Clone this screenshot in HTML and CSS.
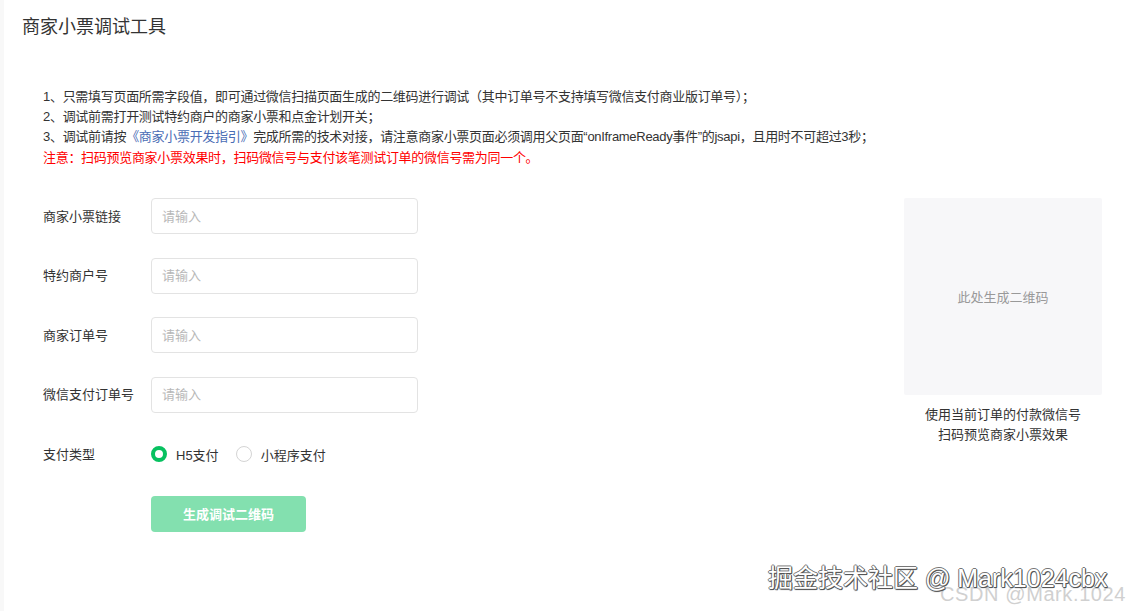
FILE: index.html
```html
<!DOCTYPE html>
<html lang="zh-CN">
<head>
<meta charset="utf-8">
<title>商家小票调试工具</title>
<link rel="stylesheet" href="styles.css">
</head>
<body>
<div class="page">
  <div class="header">商家小票调试工具</div>
  <div class="notes">
    <p>1、只需填写页面所需字段值，即可通过微信扫描页面生成的二维码进行调试（其中订单号不支持填写微信支付商业版订单号）；</p>
    <p>2、调试前需打开测试特约商户的商家小票和点金计划开关；</p>
    <p>3、调试前请按<a class="link" href="#">《商家小票开发指引》</a>完成所需的技术对接，请注意商家小票页面必须调用父页面“onIframeReady事件”的jsapi，且用时不可超过3秒；</p>
    <p class="warn">注意：扫码预览商家小票效果时，扫码微信号与支付该笔测试订单的微信号需为同一个。</p>
  </div>
  <div class="main">
    <div class="form">
      <div class="row">
        <label class="label">商家小票链接</label>
        <input class="input" placeholder="请输入">
      </div>
      <div class="row">
        <label class="label">特约商户号</label>
        <input class="input" placeholder="请输入">
      </div>
      <div class="row">
        <label class="label">商家订单号</label>
        <input class="input" placeholder="请输入">
      </div>
      <div class="row">
        <label class="label">微信支付订单号</label>
        <input class="input" placeholder="请输入">
      </div>
      <div class="row">
        <label class="label">支付类型</label>
        <div class="radios">
          <span class="radio"><span class="dot checked"></span>H5支付</span>
          <span class="radio"><span class="dot"></span>小程序支付</span>
        </div>
      </div>
      <div class="row">
        <span class="label"></span>
        <button class="btn">生成调试二维码</button>
      </div>
    </div>
    <div class="qr">
      <div class="qr-box">此处生成二维码</div>
      <div class="qr-tip">使用当前订单的付款微信号<br>扫码预览商家小票效果</div>
    </div>
  </div>
  <div class="wm-csdn">CSDN @Mark.1024</div>
  <div class="wm-juejin">掘金技术社区 @ Mark1024cbx</div>
</div>
</body>
</html>
```

FILE: styles.css
```css
* { box-sizing: border-box; }
html, body {
  margin: 0;
  padding: 0;
  background: #fff;
}
body {
  font-family: "Liberation Sans", "Noto Sans CJK SC", sans-serif;
  color: #333;
  font-size: 13px;
}
.page {
  position: relative;
  width: 1129px;
  height: 611px;
  border-left: 4px solid #f8f8f8;
  overflow: hidden;
}
.header {
  padding: 15px 0 0 18px;
  height: 87px;
  font-size: 18px;
  line-height: 24px;
  color: #333;
}
.notes {
  padding-left: 39px;
}
.notes p {
  margin: 0;
  line-height: 20px;
  white-space: nowrap;
  letter-spacing: -0.3px;
}
.notes p.warn {
  color: #f00;
  line-height: 22px;
}
.link {
  color: #4a6db5;
  text-decoration: none;
}
.main {
  display: flex;
  justify-content: space-between;
  padding: 29px 27px 0 39px;
}
.form {
  display: flex;
  flex-direction: column;
  gap: 23.5px;
}
.row {
  display: flex;
  align-items: center;
  height: 36px;
}
.label {
  width: 108px;
  flex: none;
  color: #333;
  position: relative;
  top: -1px;
}
.input {
  width: 267px;
  height: 36px;
  border: 1px solid #e3e3e3;
  border-radius: 4px;
  padding: 0 10px;
  font-family: inherit;
  font-size: 13px;
  color: #333;
  outline: none;
}
.input::placeholder {
  color: #b8b8b8;
}
.radios {
  display: flex;
  gap: 17px;
}
.radio {
  display: flex;
  align-items: center;
  gap: 9px;
  color: #333;
}
.dot {
  width: 16px;
  height: 16px;
  border-radius: 50%;
  border: 1px solid #d4d4d4;
  background: #fff;
}
.dot.checked {
  border: 4.5px solid #07c160;
}
.btn {
  width: 155px;
  height: 36px;
  border: none;
  border-radius: 4px;
  background: #83e0af;
  color: #fff;
  font-family: inherit;
  font-size: 13px;
  font-weight: bold;
}
.qr {
  display: flex;
  flex-direction: column;
  align-items: center;
  width: 198px;
}
.qr-box {
  width: 198px;
  height: 197px;
  background: #f7f7f9;
  border-radius: 2px;
  display: flex;
  align-items: center;
  justify-content: center;
  color: #999;
  font-size: 13px;
}
.qr-tip {
  margin-top: 10px;
  text-align: center;
  line-height: 20px;
  color: #333;
}
.wm-csdn {
  position: absolute;
  left: 936px;
  top: 581px;
  font-size: 20px;
  line-height: 26px;
  color: #d0d0d0;
  letter-spacing: 0.6px;
}
.wm-juejin {
  position: absolute;
  left: 764px;
  top: 562px;
  font-size: 25px;
  line-height: 32px;
  color: #fff;
  text-shadow: 1px 1px 0 #555, -1px 0 0 #777, 0 -1px 0 #777, 1px 0 0 #555, 0 1px 1px #444;
}
```
